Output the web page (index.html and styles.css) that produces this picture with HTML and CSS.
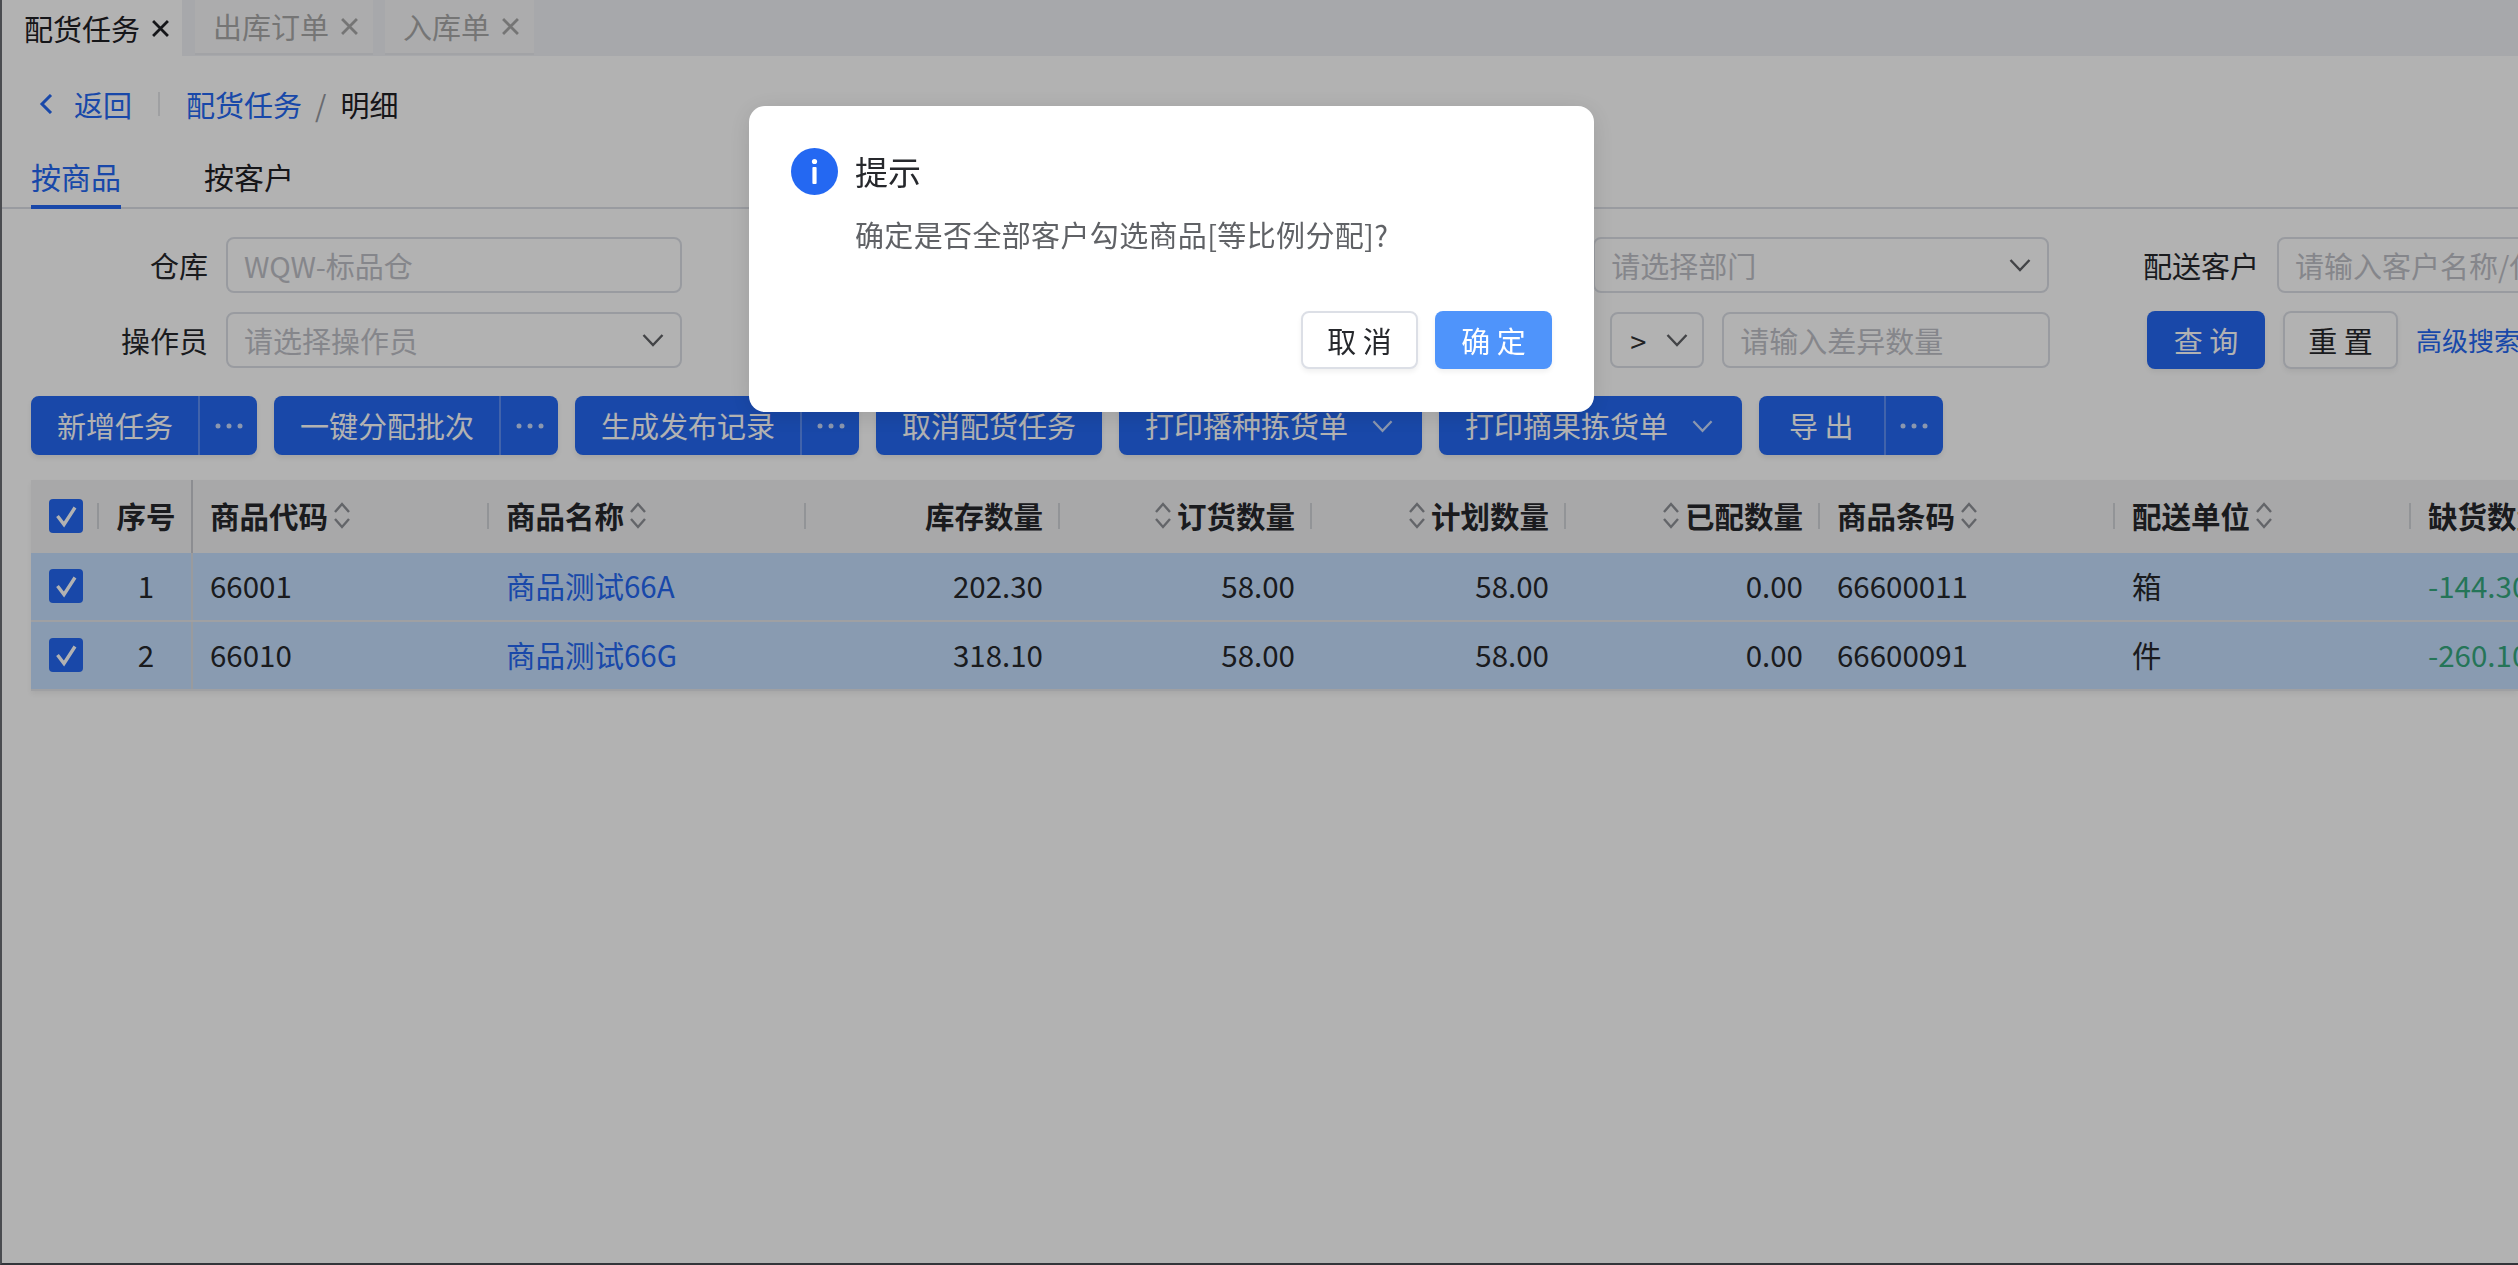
FILE: index.html
```html
<!DOCTYPE html>
<html>
<head>
  <title>配货任务明细</title>
  <link rel="stylesheet" href="styles.css">
</head>
<body>
  <svg class="icon-defs" width="0" height="0">
    <symbol id="i-down" viewBox="0 0 22 14"><path d="M1.5 2 L11 12 L20.5 2" fill="none" stroke="currentColor" stroke-width="2.4"/></symbol>
    <symbol id="i-close" viewBox="0 0 16 16"><path d="M1 1 L15 15 M15 1 L1 15" fill="none" stroke="currentColor" stroke-width="2.6"/></symbol>
    <symbol id="i-dots" viewBox="0 0 28 6"><circle cx="3" cy="3" r="2.5" fill="currentColor"/><circle cx="14" cy="3" r="2.5" fill="currentColor"/><circle cx="25" cy="3" r="2.5" fill="currentColor"/></symbol>
    <symbol id="i-sort" viewBox="0 0 18 27"><path d="M2 10 L9 2 L16 10 M2 17 L9 25 L16 17" fill="none" stroke="currentColor" stroke-width="2.4"/></symbol>
    <symbol id="i-check" viewBox="0 0 34 34"><path d="M8.5 17 L15 25.5 L26 8.5" fill="none" stroke="#fff" stroke-width="3.4"/></symbol>
  </svg>

  <div class="tab-bar">
    <div class="page-tab active">配货任务<svg class="tab-close"><use href="#i-close"/></svg></div>
    <div class="page-tab">出库订单<svg class="tab-close"><use href="#i-close"/></svg></div>
    <div class="page-tab">入库单<svg class="tab-close"><use href="#i-close"/></svg></div>
  </div>

  <div class="crumbs">
    <svg class="back-icon" viewBox="0 0 14 20"><path d="M12 1 L3 10 L12 19" fill="none" stroke="currentColor" stroke-width="3"/></svg>
    <span class="link back-text">返回</span>
    <span class="crumb-line"></span>
    <span class="link">配货任务</span>
    <span class="crumb-sep">/</span>
    <span>明细</span>
  </div>

  <div class="sub-tabs">
    <div class="sub-tab active">按商品</div>
    <div class="sub-tab">按客户</div>
  </div>

  <div class="filters">
    <div class="field">
      <label class="field-label">仓库</label>
      <div class="input">WQW-标品仓</div>
    </div>
    <div class="field"></div>
    <div class="field">
      <label class="field-label"></label>
      <div class="input">请选择部门<svg class="select-arrow"><use href="#i-down"/></svg></div>
    </div>
    <div class="field">
      <label class="field-label">配送客户</label>
      <div class="input">请输入客户名称/代码</div>
    </div>
    <div class="field">
      <label class="field-label">操作员</label>
      <div class="input">请选择操作员<svg class="select-arrow"><use href="#i-down"/></svg></div>
    </div>
    <div class="field"></div>
    <div class="field diff-field">
      <div class="input compare"><span class="compare-val">&gt;</span><svg class="select-arrow"><use href="#i-down"/></svg></div>
      <div class="input diff-input">请输入差异数量</div>
    </div>
    <div class="field query-field">
      <button class="btn primary query-btn">查 询</button>
      <button class="btn plain reset-btn">重 置</button>
      <span class="link more-search">高级搜索</span>
    </div>
  </div>

  <div class="actions">
    <div class="split-btn"><span class="split-main">新增任务</span><span class="split-more"><svg class="dots"><use href="#i-dots"/></svg></span></div>
    <div class="split-btn"><span class="split-main">一键分配批次</span><span class="split-more"><svg class="dots"><use href="#i-dots"/></svg></span></div>
    <div class="split-btn"><span class="split-main">生成发布记录</span><span class="split-more"><svg class="dots"><use href="#i-dots"/></svg></span></div>
    <div class="split-btn"><span class="split-main plain-main">取消配货任务</span></div>
    <div class="split-btn"><span class="split-main with-arrow">打印播种拣货单<svg class="btn-arrow"><use href="#i-down"/></svg></span></div>
    <div class="split-btn"><span class="split-main with-arrow">打印摘果拣货单<svg class="btn-arrow"><use href="#i-down"/></svg></span></div>
    <div class="split-btn"><span class="split-main export">导 出</span><span class="split-more"><svg class="dots"><use href="#i-dots"/></svg></span></div>
  </div>

  <div class="table">
    <div class="tr thead">
      <div class="td center resize"><span class="checkbox"><svg><use href="#i-check"/></svg></span></div>
      <div class="td center seq">序号</div>
      <div class="td resize">商品代码<svg class="sort"><use href="#i-sort"/></svg></div>
      <div class="td resize">商品名称<svg class="sort"><use href="#i-sort"/></svg></div>
      <div class="td right resize">库存数量</div>
      <div class="td right resize"><svg class="sort"><use href="#i-sort"/></svg>订货数量</div>
      <div class="td right resize"><svg class="sort"><use href="#i-sort"/></svg>计划数量</div>
      <div class="td right resize"><svg class="sort"><use href="#i-sort"/></svg>已配数量</div>
      <div class="td resize">商品条码<svg class="sort"><use href="#i-sort"/></svg></div>
      <div class="td resize">配送单位<svg class="sort"><use href="#i-sort"/></svg></div>
      <div class="td">缺货数量</div>
    </div>
    <div class="tr selected">
      <div class="td center"><span class="checkbox"><svg><use href="#i-check"/></svg></span></div>
      <div class="td center seq">1</div>
      <div class="td">66001</div>
      <div class="td"><span class="link">商品测试66A</span></div>
      <div class="td right">202.30</div>
      <div class="td right">58.00</div>
      <div class="td right">58.00</div>
      <div class="td right">0.00</div>
      <div class="td">66600011</div>
      <div class="td">箱</div>
      <div class="td short">-144.30</div>
    </div>
    <div class="tr selected">
      <div class="td center"><span class="checkbox"><svg><use href="#i-check"/></svg></span></div>
      <div class="td center seq">2</div>
      <div class="td">66010</div>
      <div class="td"><span class="link">商品测试66G</span></div>
      <div class="td right">318.10</div>
      <div class="td right">58.00</div>
      <div class="td right">58.00</div>
      <div class="td right">0.00</div>
      <div class="td">66600091</div>
      <div class="td">件</div>
      <div class="td short">-260.10</div>
    </div>
  </div>

  <div class="mask">
    <div class="dialog">
      <div class="dialog-head">
        <svg class="dialog-icon" viewBox="0 0 47 47">
          <circle cx="23.5" cy="23.5" r="23.5" fill="#2468f2"/>
          <circle cx="23.5" cy="13.5" r="2.6" fill="#fff"/>
          <rect x="21.4" y="19" width="4.2" height="17" rx="1" fill="#fff"/>
        </svg>
        <span class="dialog-title">提示</span>
      </div>
      <div class="dialog-msg">确定是否全部客户勾选商品[等比例分配]?</div>
      <div class="dialog-foot">
        <button class="btn plain dialog-btn">取 消</button>
        <button class="btn confirm dialog-btn">确 定</button>
      </div>
    </div>
  </div>
</body>
</html>
```

FILE: styles.css
```css
* {
  box-sizing: border-box;
}

html, body {
  height: 100%;
}

body {
  margin: 0;
  overflow: hidden;
  background-color: #fff;
  color: #26282c;
  font-family: "Noto Sans CJK SC", "Noto Sans", sans-serif;
  font-size: 29px;
  line-height: 1.2;
}

.icon-defs {
  position: absolute;
}

.link {
  color: #2468f2;
}

/* Top page tabs */
.tab-bar {
  display: flex;
  height: 56px;
  background-color: #f0f1f5;
}

.page-tab {
  display: flex;
  align-items: center;
  height: 55px;
  margin-right: 12px;
  padding: 0 15px 0 18px;
  background-color: #f7f7f8;
  border-bottom: 2px solid #e9eaee;
  color: #a8a8a8;
}

.page-tab.active {
  margin-right: 13px;
  height: 56px;
  padding: 0 13px 0 24px;
  background-color: #fff;
  border-bottom: none;
  color: #1f2024;
}

.tab-close {
  width: 17px;
  height: 17px;
  margin-left: 12px;
}

.page-tab.active .tab-close {
  stroke-width: 1px;
  stroke: currentColor;
}

/* Breadcrumb */
.crumbs {
  display: flex;
  align-items: center;
  height: 40px;
  margin-top: 28px;
  padding-left: 39px;
  color: #1f2024;
}

.back-icon {
  width: 14px;
  height: 20px;
  color: #2468f2;
}

.back-text {
  margin-left: 21px;
}

.crumb-line {
  width: 2px;
  height: 24px;
  margin: 0 26px 0 26px;
  background-color: #e4e5e8;
}

.crumb-sep {
  margin: 0 14px 0 13px;
  color: #97999f;
}

/* Sub tabs */
.sub-tabs {
  display: flex;
  gap: 83px;
  margin-top: 31px;
  padding-left: 31px;
  border-bottom: 2px solid #dcdfe6;
}

.sub-tab {
  height: 54px;
  padding-top: 3px;
  margin-bottom: -2px;
  font-size: 30px;
  color: #1f2024;
}

.sub-tab.active {
  border-bottom: 4px solid #2468f2;
  color: #2468f2;
}

/* Filter form */
.filters {
  display: grid;
  grid-template-columns: repeat(4, 683.67px);
  row-gap: 19px;
  margin-top: 28px;
  padding-left: 31px;
}

.field {
  display: flex;
  align-items: center;
  gap: 18px;
  height: 56px;
}

.field-label {
  width: 177px;
  flex: none;
  text-align: right;
}

.input {
  display: flex;
  align-items: center;
  justify-content: space-between;
  flex: none;
  width: 456px;
  height: 56px;
  padding: 0 16px;
  background-color: #fff;
  border: 2px solid #dcdfe6;
  border-radius: 8px;
  color: #bfc1c7;
  white-space: nowrap;
  overflow: hidden;
}

.select-arrow {
  width: 22px;
  height: 14px;
  flex: none;
  color: #606266;
}

.diff-field {
  padding-left: 212px;
}

.input.compare {
  width: 94px;
  padding: 0 14px 0 18px;
}

.compare-val {
  color: #303133;
}

.input.diff-input {
  width: 328px;
}

.query-field {
  gap: 18px;
  padding-left: 65px;
}

.btn {
  height: 58px;
  padding: 0;
  border: 2px solid transparent;
  border-radius: 8px;
  font-family: inherit;
  font-size: 29px;
  box-shadow: 0 3px 5px rgba(0, 0, 0, 0.06);
}

.btn.primary {
  background-color: #2468f2;
  color: #fff;
}

.btn.plain {
  background-color: #fff;
  border-color: #dcdfe6;
  color: #26282c;
}

.query-btn {
  width: 118px;
}

.reset-btn {
  width: 115px;
}

.more-search {
  font-size: 26px;
  white-space: nowrap;
}

/* Action buttons */
.actions {
  display: flex;
  gap: 17px;
  margin-top: 28px;
  padding-left: 31px;
}

.split-btn {
  display: flex;
  height: 59px;
  background-color: #2468f2;
  border-radius: 8px;
  color: #fff;
  box-shadow: 0 3px 5px rgba(0, 0, 0, 0.08);
}

.split-main {
  display: flex;
  align-items: center;
  padding: 0 25px 0 26px;
  white-space: nowrap;
}

.split-main.plain-main {
  padding-right: 26px;
}

.split-main.with-arrow {
  padding-right: 29px;
}

.split-main.export {
  padding: 0 30px;
}

.btn-arrow {
  width: 21px;
  height: 14px;
  margin-left: 24px;
  color: #c7d8fb;
}

.split-more {
  display: flex;
  align-items: center;
  justify-content: center;
  width: 59px;
  border-left: 2px solid #5d8ff5;
}

.dots {
  width: 28px;
  height: 6px;
  color: #c7d8fb;
}

/* Table */
.table {
  margin: 25px 0 0 31px;
  font-size: 29.5px;
  box-shadow: 0 3px 5px rgba(0, 0, 0, 0.06);
}

.tr {
  display: grid;
  grid-template-columns: 68px 94px 296px 317px 254px 252px 254px 254px 295px 296px 1fr;
  height: 69px;
  border-bottom: 2px solid #e4e6ea;
}

.tr.thead {
  height: 73px;
  background-color: #f1f1f3;
  border-bottom: none;
  font-weight: 700;
}

.tr.selected {
  background-color: #c5dffe;
}

.td {
  position: relative;
  display: flex;
  align-items: center;
  gap: 5px;
  padding: 0 17px 2px;
  white-space: nowrap;
}

.td.center {
  justify-content: center;
  padding: 0 0 2px 2px;
}

.td.right {
  justify-content: flex-end;
}

.td.seq {
  border-right: 2px solid #dcdee3;
}

.thead .td.seq {
  border-right-color: #c9cbd0;
}

.td.resize::after {
  content: "";
  position: absolute;
  top: 23px;
  right: 0;
  width: 2px;
  height: 26px;
  background-color: #d2d4d9;
}

.td.short {
  color: #35a87e;
}

.sort {
  width: 18px;
  height: 27px;
  flex: none;
  color: #8f9197;
}

.checkbox {
  display: block;
  width: 34px;
  height: 34px;
  background-color: #2468f2;
  border-radius: 4px;
}

.checkbox svg {
  display: block;
  width: 34px;
  height: 34px;
}

/* Modal */
.mask {
  position: fixed;
  top: 0;
  left: 0;
  right: 0;
  bottom: 0;
  background-color: rgba(0, 0, 0, 0.3);
  border-left: 2px solid #4a4c50;
  border-bottom: 2px solid #33353a;
}

.dialog {
  position: absolute;
  top: 106px;
  left: 747px;
  width: 845px;
  height: 306px;
  padding: 42px 42px 0;
  background-color: #fff;
  border-radius: 16px;
  box-shadow: 0 4px 24px rgba(0, 0, 0, 0.12);
}

.dialog-head {
  display: flex;
  align-items: center;
  gap: 17px;
}

.dialog-icon {
  width: 47px;
  height: 47px;
  flex: none;
}

.dialog-title {
  font-size: 33px;
}

.dialog-msg {
  margin-top: 22px;
  padding-left: 64px;
  letter-spacing: 0.35px;
  color: #606266;
}

.dialog-foot {
  display: flex;
  justify-content: flex-end;
  gap: 17px;
  margin-top: 59px;
}

.dialog-btn {
  width: 117px;
  height: 58px;
}

.btn.confirm {
  background-color: #4f94fb;
  color: #fff;
}
```
